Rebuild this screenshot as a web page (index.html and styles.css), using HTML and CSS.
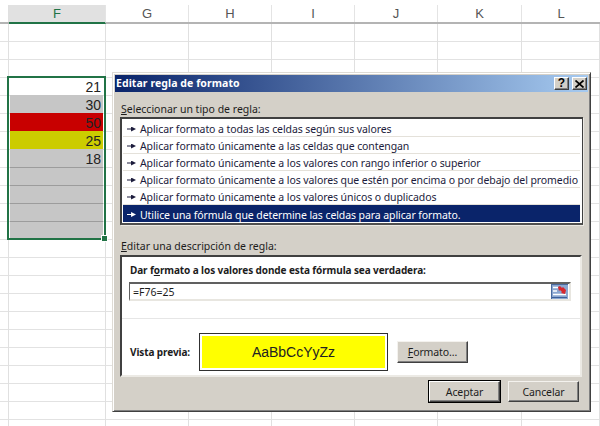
FILE: index.html
```html
<!DOCTYPE html>
<html lang="es">
<head>
<meta charset="utf-8">
<title>Editar regla de formato</title>
<link rel="stylesheet" href="styles.css">
</head>
<body>
<div class="sheet">
  <div class="headers">
    <div class="hd hd-gutter"></div>
    <div class="hd hd-f hd-active">F</div>
    <div class="hd hd-n">G</div>
    <div class="hd hd-n">H</div>
    <div class="hd hd-n">I</div>
    <div class="hd hd-n">J</div>
    <div class="hd hd-k">K</div>
    <div class="hd hd-l">L</div>
  </div>
  <div class="grid">
    <div class="col hd-gutter"></div>
    <div class="col hd-f col-data">
      <div class="cell cell-white">21</div>
      <div class="cell cell-gray">30</div>
      <div class="cell cell-red">50</div>
      <div class="cell cell-olive">25</div>
      <div class="cell cell-gray">18</div>
      <div class="cell cell-gray cell-line"></div>
      <div class="cell cell-gray cell-line"></div>
      <div class="cell cell-gray cell-line"></div>
      <div class="cell cell-gray cell-line cell-last"></div>
    </div>
    <div class="col hd-n"></div>
    <div class="col hd-n"></div>
    <div class="col hd-n"></div>
    <div class="col hd-n"></div>
    <div class="col hd-k"></div>
    <div class="col hd-l"></div>
    <div class="selection"><span class="handle"></span></div>
  </div>
</div>

<div class="dialog">
  <div class="titlebar">
    <span class="title">Editar regla de formato</span>
    <span class="tbtn tbtn-help">?</span>
    <span class="tbtn">
      <svg class="tbtn-x" viewBox="0 0 9 8" width="9" height="8"><path d="M.5.5l8 7M8.5.5l-8 7" stroke="#000" stroke-width="1.7" fill="none"/></svg>
    </span>
  </div>
  <div class="label label-first"><u>S</u>eleccionar un tipo de regla:</div>
  <div class="rules">
    <div class="rule">Aplicar formato a todas las celdas según sus valores</div>
    <div class="rule">Aplicar formato únicamente a las celdas que contengan</div>
    <div class="rule">Aplicar formato únicamente a los valores con rango inferior o superior</div>
    <div class="rule">Aplicar formato únicamente a los valores que estén por encima o por debajo del promedio</div>
    <div class="rule">Aplicar formato únicamente a los valores únicos o duplicados</div>
    <div class="rule rule-selected">Utilice una fórmula que determine las celdas para aplicar formato.</div>
  </div>
  <div class="label label-second"><u>E</u>ditar una descripción de regla:</div>
  <div class="panel">
    <div class="heading">Dar f<u>o</u>rmato a los valores donde esta fórmula sea verdadera:</div>
    <div class="input">
      <span class="input-text">=F76=25</span>
      <svg class="picker" viewBox="0 0 17 15" width="17" height="15">
        <rect width="17" height="15" fill="#8aa6d0"/>
        <path d="M2 3.500h5M2 7h4M2 10.500h13" stroke="#fff" stroke-width="1.3"/>
        <path d="M0 .5h17M.5 0v15" stroke="#4a6a9e" stroke-width="1"/>
        <path d="M1 13.500h15" stroke="#3c5f9a" stroke-width="1"/>
        <path d="M7 3l2-1 2 2 1-1 3 3-1 4-4-1 1-1-2-2-1 1z" fill="#d8262c"/>
      </svg>
    </div>
    <div class="divider"></div>
    <div class="preview-row">
      <span class="preview-label">Vista previa:</span>
      <div class="preview">AaBbCcYyZz</div>
      <button class="btn btn-format"><u>F</u>ormato...</button>
    </div>
  </div>
  <div class="actions">
    <button class="btn btn-default">Aceptar</button>
    <button class="btn">Cancelar</button>
  </div>
</div>
</body>
</html>
```

FILE: styles.css
```css
* { box-sizing: border-box; }
html, body { margin: 0; padding: 0; }
body {
  width: 600px;
  height: 426px;
  overflow: hidden;
  background: #fff;
  position: relative;
  font-family: "Liberation Sans", Arial, sans-serif;
}
u { text-decoration-thickness: 1px; text-underline-offset: 1px; }

/* spreadsheet */
.sheet { padding-top: 5px; }
.headers {
  display: flex;
  height: 19px;
  border-bottom: 2px solid #b4b4b4;
}
.hd {
  font-size: 13px;
  line-height: 17px;
  text-align: center;
  color: #555;
  border-right: 1px solid #e4e4e4;
}
.hd-gutter { width: 9px; border-right: 1px solid #e0e0e0; }
.hd-f { width: 97px; }
.hd-n { width: 83px; }
.hd-k { width: 84px; }
.hd-l { flex: 1; border-right: 0; }
.hd-active {
  background: #e1e1e1;
  color: #217346;
  border-bottom: 2px solid #217346;
  height: 19px;
}
.grid {
  display: flex;
  height: 402px;
  position: relative;
  background: repeating-linear-gradient(to bottom, #fff 0, #fff 17px, #e2e2e2 17px, #e2e2e2 18px);
}
.col { border-right: 1px solid #e0e0e0; }
.col-data { padding-top: 53px; }
.cell {
  height: 18px;
  margin: 0 2px 0 1px;
  padding-right: 2px;
  text-align: right;
  font-size: 14px;
  line-height: 20px;
  color: #222;
}
.cell-white { background: #fff; }
.cell-gray { background: #c6c6c6; }
.cell-red { background: #c80000; }
.cell-olive { background: #cccc00; }
.cell-line { border-top: 1px solid #9c9c9c; }
.cell-last { height: 17px; }
.selection {
  position: absolute;
  left: 7px;
  top: 52px;
  width: 99px;
  height: 164px;
  border: 2px solid #217346;
}
.handle {
  position: absolute;
  right: -3px;
  bottom: -3px;
  width: 5px;
  height: 5px;
  background: #217346;
  outline: 1px solid #fff;
}

/* dialog */
.dialog {
  position: absolute;
  left: 112px;
  top: 72px;
  width: 479px;
  height: 340px;
  padding: 2px;
  background: #d4d0c8;
  border: 1px solid;
  border-color: #dedbd5 #404040 #404040 #dedbd5;
  box-shadow: inset 1px 1px #fff, inset -1px -1px #808080;
  font-family: "Noto Sans", sans-serif;
  font-size: 10.5px;
  letter-spacing: 0;
  color: #1c1c1c;
}
.titlebar {
  display: flex;
  align-items: center;
  gap: 3px;
  height: 17px;
  padding: 0 1px 0 1px;
  background: linear-gradient(to right, #0a246a, #a6caf0);
}
.title {
  flex: 1;
  color: #fff;
  font-weight: 700;
  line-height: 17px;
  letter-spacing: 0.07px;
}
.tbtn {
  width: 15px;
  height: 13px;
  display: flex;
  align-items: center;
  justify-content: center;
  background: #d4d0c8;
  border: 1px solid;
  border-color: #fff #404040 #404040 #fff;
  box-shadow: inset -1px -1px #808080;
}
.tbtn-help {
  font-family: "Liberation Sans", sans-serif;
  font-weight: 700;
  font-size: 12px;
  line-height: 11px;
  letter-spacing: 0;
  color: #000;
}
.label { line-height: 14px; margin-left: 6px; }
.label-first { margin-top: 10px; }
.label-second { margin-top: 14px; }
.rules {
  margin: 1px 0 0 5px;
  width: 463px;
  height: 108px;
  padding: 1px 2px 0 1px;
  background: #fff;
  border: 2px solid #404040;
  border-right-width: 1px;
  border-bottom-color: #505050;
  box-shadow: 1px 1px #ece9e3;
}
.rule {
  display: flex;
  align-items: center;
  gap: 4px;
  height: 17px;
  padding-left: 4px;
  padding-top: 2px;
  white-space: nowrap;
  letter-spacing: -0.09px;
  border-bottom: 1px solid #e4e1da;
  color: #1c1c3c;
}
.rule::before {
  content: "";
  flex: none;
  width: 9px;
  height: 5px;
  background: currentColor;
  clip-path: polygon(0 40%, 45% 40%, 45% 0, 100% 50%, 45% 100%, 45% 60%, 0 60%);
}
.rule-selected {
  background: #0a246a;
  color: #fff;
  border-bottom: 0;
}
.panel {
  margin: 2px 0 0 5px;
  width: 462px;
  height: 122px;
  padding-top: 6px;
  background: #fff;
  border: 2px solid;
  border-color: #404040 #eceae5 #eceae5 #404040;
}
.heading { font-size: 10px; font-weight: 700; line-height: 14px; padding-left: 8px; letter-spacing: -0.1px; }
.input {
  display: flex;
  align-items: center;
  justify-content: space-between;
  width: 442px;
  height: 19px;
  margin: 5px 0 0 7px;
  padding: 0 1px 0 3px;
  background: #fff;
  border: 2px solid;
  border-color: #606060 #e8e6e0 #e8e6e0 #606060;
  border-left-width: 1px;
}
.divider { height: 1px; margin-top: 17px; background: #e6e6e6; }
.preview-row {
  display: flex;
  align-items: center;
  padding: 14px 0 0 8px;
}
.preview-label { flex: none; width: 69px; font-size: 10px; font-weight: 700; letter-spacing: -0.1px; white-space: nowrap; }
.preview {
  width: 189px;
  height: 38px;
  background: #ff0;
  border: 1px solid #303030;
  box-shadow: inset 0 0 0 2px #fff;
  font-family: "Liberation Sans", sans-serif;
  font-size: 14px;
  line-height: 36px;
  letter-spacing: 0;
  text-align: center;
  color: #222;
}
.btn {
  width: 71px;
  height: 21px;
  padding: 0;
  background: #d4d0c8;
  border: 1px solid;
  border-color: #f4f2ee #404040 #404040 #f4f2ee;
  box-shadow: inset -1px -1px #808080;
  font: inherit;
  letter-spacing: -0.1px;
  color: #1c1c1c;
}
.btn-format { margin-left: 9px; height: 22px; }
.btn-default {
  outline: 1px solid #000;
  outline-offset: 0;
  border-color: #fff #404040 #404040 #fff;
}
.actions {
  display: flex;
  justify-content: flex-end;
  gap: 8px;
  margin-top: 4px;
  padding-right: 9px;
}
```
